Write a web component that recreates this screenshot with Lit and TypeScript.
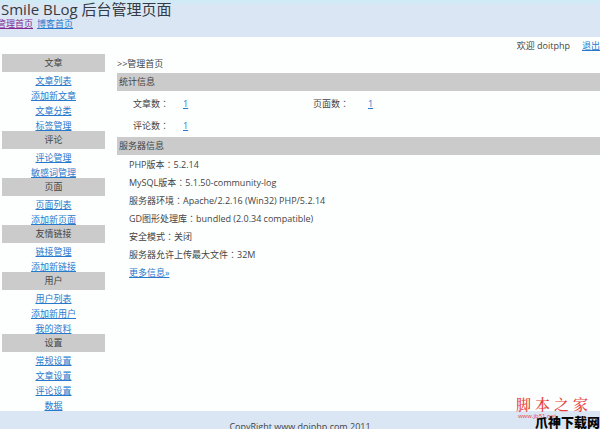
import { LitElement, html, css } from "lit";
import { customElement } from "lit/decorators.js";

interface Group {
  title: string;
  links: string[];
}

const GROUPS: Group[] = [
  { title: "文章", links: ["文章列表", "添加新文章", "文章分类", "标签管理"] },
  { title: "评论", links: ["评论管理", "敏感词管理"] },
  { title: "页面", links: ["页面列表", "添加新页面"] },
  { title: "友情链接", links: ["链接管理", "添加新链接"] },
  { title: "用户", links: ["用户列表", "添加新用户", "我的资料"] },
  { title: "设置", links: ["常规设置", "文章设置", "评论设置", "数据"] },
];

const STATS = ["文章数", "页面数", "评论数"];

const SERVER: [string, string][] = [
  ["PHP版本", "5.2.14"],
  ["MySQL版本", "5.1.50-community-log"],
  ["服务器环境", "Apache/2.2.16 (Win32) PHP/5.2.14"],
  ["GD图形处理库", "bundled (2.0.34 compatible)"],
  ["安全模式", "关闭"],
  ["服务器允许上传最大文件", "32M"],
];

// The Traditional Chinese face centres the full-width colon in its cell.
const colon = html`<span class="colon">：</span>`;

@customElement("app-root")
export class AppRoot extends LitElement {
  static styles = css`
    :host {
      display: block;
      position: relative;
      height: 100vh;
      overflow: hidden;
      background: #dae6f4;
      color: #444;
      font: 9px/18px "Open Sans", "Noto Sans CJK SC", sans-serif;
    }
    h1, h2, ul, p {
      margin: 0;
      padding: 0;
      font-size: inherit;
      font-weight: normal;
      list-style: none;
    }
    a {
      color: #2878cc;
      text-decoration: underline;
    }
    .colon {
      font-family: "Noto Sans CJK TC", sans-serif;
      line-height: 1;
    }
    header {
      height: 37px;
      background: linear-gradient(#cdecf6, #dae6f4 6px);
    }
    h1 {
      padding-left: 1px;
      font-size: 15px;
      line-height: 18px;
      color: #333b44;
    }
    .top {
      display: flex;
      gap: 4px;
      margin-left: -3px;
      line-height: 12px;
    }
    .top .visited {
      color: #83298f;
    }
    .page {
      background: #fdfffe;
    }
    .user {
      display: flex;
      justify-content: flex-end;
      gap: 12px;
      height: 17px;
    }
    .columns {
      display: flex;
      gap: 12px;
      padding-left: 2px;
    }
    nav.side {
      flex: none;
      width: 103px;
      text-align: center;
    }
    .group {
      margin-bottom: -2px;
    }
    .group ul {
      padding-top: 1px;
    }
    .group li {
      line-height: 15px;
    }
    h2 {
      background: #cbcbcb;
    }
    main {
      flex: 1;
      min-width: 0;
    }
    main h2 {
      padding-left: 2px;
    }
    .crumb {
      padding-top: 1px;
    }
    .stats {
      display: grid;
      grid-template-columns: 50px 130px 55px 1fr;
      padding: 2px 0 1px 16px;
      line-height: 21px;
      row-gap: 1px;
    }
    .info {
      padding: 1px 0 0 12px;
    }
    footer {
      padding-top: 7px;
      text-align: center;
    }
    .mark {
      position: absolute;
      right: 12px;
      bottom: 9px;
      display: flex;
      flex-direction: column;
      color: #e8413c;
    }
    .seal {
      display: flex;
      gap: 4px;
      font: 600 15px/18px "Noto Serif CJK SC", "Noto Sans CJK SC", serif;
      font-weight: 500;
    }
    .site {
      font-size: 6px;
      line-height: 7px;
      padding-left: 2px;
    }
    .brand {
      position: absolute;
      right: 0;
      bottom: 0;
      color: #080808;
      font: 900 13px/15px "Noto Sans CJK SC", sans-serif;
    }
  `;

  render() {
    return html`
      <header>
        <h1>Smile BLog 后台管理页面</h1>
        <nav class="top">
          <a class="visited" href="#">管理首页</a>
          <a href="#">博客首页</a>
        </nav>
      </header>
      <div class="page">
        <div class="user"><span>欢迎 doitphp</span><a href="#">退出</a></div>
        <div class="columns">
          <nav class="side">
            ${GROUPS.map(
              (g) => html`<section class="group">
                <h2>${g.title}</h2>
                <ul>
                  ${g.links.map((l) => html`<li><a href="#">${l}</a></li>`)}
                </ul>
              </section>`
            )}
          </nav>
          <main>
            <p class="crumb">&gt;&gt;管理首页</p>
            <h2>统计信息</h2>
            <div class="stats">
              ${STATS.map(
                (s) => html`<span>${s}${colon}</span><span><a href="#">1</a></span>`
              )}
            </div>
            <h2>服务器信息</h2>
            <ul class="info">
              ${SERVER.map(([k, v]) => html`<li>${k}${colon}${v}</li>`)}
              <li><a href="#">更多信息»</a></li>
            </ul>
          </main>
        </div>
      </div>
      <footer>CopyRight www.doiphp.com 2011</footer>
      <div class="mark">
        <div class="seal"><span>脚</span><span>本</span><span>之</span><span>家</span></div>
        <div class="site">www.jb51.net</div>
      </div>
      <div class="brand">爪神下载网</div>
    `;
  }
}
